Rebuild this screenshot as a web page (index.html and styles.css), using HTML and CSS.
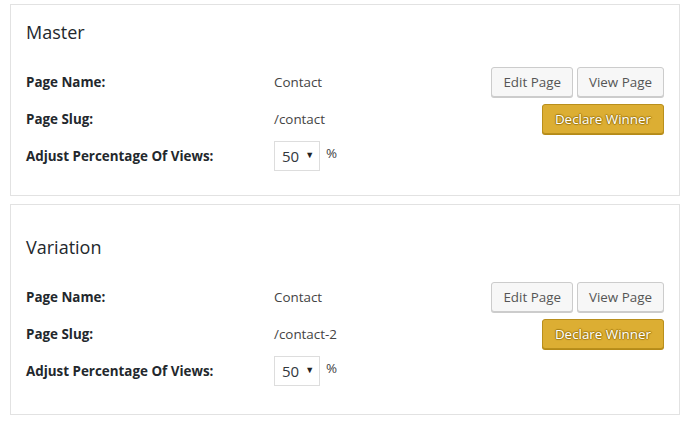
FILE: index.html
```html
<!DOCTYPE html>
<html>
<head>
<meta charset="utf-8">
<link rel="stylesheet" href="styles.css">
</head>
<body>
<div class="page">
  <section class="card">
    <h2 class="card-title">Master</h2>
    <div class="rows">
      <div class="label">Page Name:</div>
      <div class="value">Contact</div>
      <div class="actions">
        <span class="btn">Edit Page</span>
        <span class="btn">View Page</span>
      </div>
      <div class="label">Page Slug:</div>
      <div class="value">/contact</div>
      <div class="actions">
        <span class="btn btn-primary">Declare Winner</span>
      </div>
      <div class="label">Adjust Percentage Of Views:</div>
      <div class="value">
        <span class="select"><span class="select-val">50</span><span class="select-arrow">▼</span></span>
        <span class="pct">%</span>
      </div>
      <div class="actions"></div>
    </div>
  </section>
  <section class="card card-variation">
    <h2 class="card-title">Variation</h2>
    <div class="rows">
      <div class="label">Page Name:</div>
      <div class="value">Contact</div>
      <div class="actions">
        <span class="btn">Edit Page</span>
        <span class="btn">View Page</span>
      </div>
      <div class="label">Page Slug:</div>
      <div class="value">/contact-2</div>
      <div class="actions">
        <span class="btn btn-primary">Declare Winner</span>
      </div>
      <div class="label">Adjust Percentage Of Views:</div>
      <div class="value">
        <span class="select"><span class="select-val">50</span><span class="select-arrow">▼</span></span>
        <span class="pct">%</span>
      </div>
      <div class="actions"></div>
    </div>
  </section>
</div>
</body>
</html>
```

FILE: styles.css
```css
html, body {
  margin: 0;
  padding: 0;
  background: #ffffff;
}
body {
  font-family: "Open Sans", "Noto Sans", sans-serif;
  font-size: 13px;
  color: #444;
}
.page {
  padding: 4px 8px 0 10px;
  display: flex;
  flex-direction: column;
  gap: 8px;
}
.card {
  width: 670px;
  border: 1px solid #e2e2e2;
  background: #fff;
  padding: 0 15px 21px 15px;
  box-sizing: border-box;
}
.card-variation {
  padding-top: 15px;
  padding-bottom: 25px;
}
.card-title {
  margin: 14px 0 18px 0;
  font-size: 18px;
  line-height: 26px;
  font-weight: 400;
  color: #23282d;
}
.rows {
  display: grid;
  grid-template-columns: 248px 1fr auto;
  grid-auto-rows: 37px;
  align-items: center;
}
.label {
  font-weight: 700;
  color: #23282d;
  font-size: 13.4px;
}
.value {
  display: flex;
  align-items: center;
  color: #444;
  font-size: 13.4px;
}
.actions {
  display: flex;
  justify-content: flex-end;
  gap: 4px;
}
.btn {
  display: inline-flex;
  align-items: center;
  height: 30px;
  box-sizing: border-box;
  padding: 0 11px;
  border: 1px solid #ccc;
  border-radius: 3px;
  background: #f7f7f7;
  box-shadow: 0 1px 0 #ccc;
  color: #555;
  font-size: 13.4px;
}
.btn-primary {
  background: #dcae33;
  border-color: #b98f1c;
  box-shadow: 0 1px 0 #b58a17;
  color: #fff;
  text-shadow: 0 -1px 1px #a57e14, 1px 0 1px #a57e14, 0 1px 1px #a57e14, -1px 0 1px #a57e14;
  padding: 0 12px;
}
.select {
  display: inline-flex;
  align-items: center;
  width: 46px;
  height: 30px;
  box-sizing: border-box;
  border: 1px solid #ddd;
  padding: 0 0 0 7px;
  font-size: 15px;
  color: #32373c;
}
.select-val {
  margin-right: 6px;
}
.select-arrow {
  font-size: 9px;
  color: #222;
  margin-top: -3px;
}
.pct {
  margin-left: 6px;
  margin-top: -6px;
  font-size: 13.4px;
}
```
